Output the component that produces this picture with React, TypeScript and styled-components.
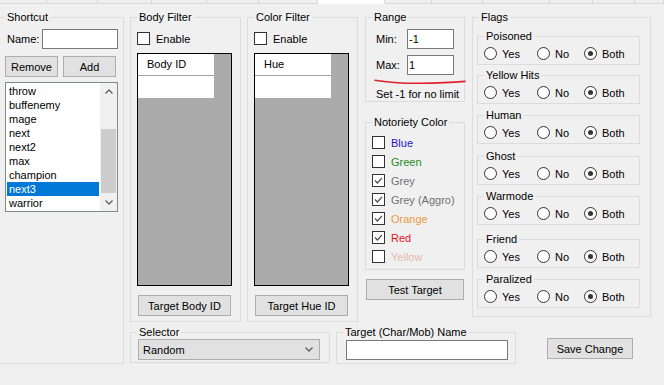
import styled, { createGlobalStyle } from 'styled-components';

const GlobalStyle = createGlobalStyle`
  * {
    box-sizing: border-box;
  }
  body {
    margin: 0;
    background: #f0f0f0;
    font-family: 'Liberation Sans', Arial, sans-serif;
    font-size: 11px;
    color: #000;
  }
  input,
  button {
    font: inherit;
    color: inherit;
  }
`;

// widths of the tab headers peeking in at the top edge
const TABS = [47, 51, 54, 55, 52, 59, 67, 47, 51, 67, 43, 42, 29];
const ACTIVE_TAB = 6;

const SHORTCUTS = ['throw', 'buffenemy', 'mage', 'next', 'next2', 'max', 'champion', 'next3', 'warrior'];
const SELECTED_SHORTCUT = 'next3';

const NOTORIETY = [
  { label: 'Blue', color: '#1c16c4', checked: false },
  { label: 'Green', color: '#248a1c', checked: false },
  { label: 'Grey', color: '#707070', checked: true },
  { label: 'Grey (Aggro)', color: '#707070', checked: true },
  { label: 'Orange', color: '#f09840', checked: true },
  { label: 'Red', color: '#e4141c', checked: true },
  { label: 'Yellow', color: '#e6b8ae', checked: false },
];

// space above each flag box (they are not evenly spread in the form)
const FLAGS = [
  { label: 'Poisoned', top: 5 },
  { label: 'Yellow Hits', top: 3 },
  { label: 'Human', top: 4 },
  { label: 'Ghost', top: 5 },
  { label: 'Warmode', top: 4 },
  { label: 'Friend', top: 7 },
  { label: 'Paralized', top: 4 },
];

const RADIO_OPTIONS = [
  { label: 'Yes', width: 53 },
  { label: 'No', width: 47 },
  { label: 'Both', width: 50 },
];

const CheckMark = () => (
  <svg width='9' height='9' viewBox='0 0 9 9'>
    <polyline points='1,4.5 3.4,7 8,1.8' fill='none' stroke='#4a4a4a' strokeWidth='1.2' />
  </svg>
);

const Chevron = ({ up }: { up?: boolean }) => (
  <svg width='8' height='5' viewBox='0 0 8 5'>
    <polyline
      points={up ? '0.5,4.5 4,1 7.5,4.5' : '0.5,0.5 4,4 7.5,0.5'}
      fill='none'
      stroke='#606060'
      strokeWidth='1.3'
    />
  </svg>
);

const CheckBox = ({ checked }: { checked?: boolean }) => (
  <Box>{checked && <CheckMark />}</Box>
);

export default function App() {
  return (
    <Page>
      <GlobalStyle />
      <TabStrip>
        {TABS.map((w, i) => (
          <Tab key={i} $w={w} $active={i === ACTIVE_TAB} />
        ))}
      </TabStrip>

      <Content>
        <Group $w={126} $h={354} style={{ marginLeft: -2 }}>
          <Legend>Shortcut</Legend>
          <Pane $pl={7}>
            <FieldRow $mt={5}>
              <FieldLabel $w={35} $ml={1}>Name:</FieldLabel>
              <TextInput $w={76} readOnly defaultValue='' />
            </FieldRow>
            <ButtonRow>
              <Button $w={53}>Remove</Button>
              <Button $w={53}>Add</Button>
            </ButtonRow>
            <ListBox>
              <ListItems>
                {SHORTCUTS.map(name => (
                  <ListItem key={name} $selected={name === SELECTED_SHORTCUT}>
                    {name}
                  </ListItem>
                ))}
              </ListItems>
              <ScrollBar>
                <ScrollArrow>
                  <Chevron up />
                </ScrollArrow>
                <ScrollTrack>
                  <ScrollThumb />
                </ScrollTrack>
                <ScrollArrow>
                  <Chevron />
                </ScrollArrow>
              </ScrollBar>
            </ListBox>
          </Pane>
        </Group>

        <RightSide>
          <TopRow>
            <FilterGroup title='Body Filter' column='Body ID' button='Target Body ID' />
            <Spacer $w={6} />
            <FilterGroup title='Color Filter' column='Hue' button='Target Hue ID' />
            <Spacer $w={7} />

            <RangeColumn>
              <Group $w={100} $h={92}>
                <Legend>Range</Legend>
                <Pane $pl={10}>
                  <FieldRow $mt={5}>
                    <FieldLabel $w={31}>Min:</FieldLabel>
                    <TextInput $w={47} readOnly defaultValue='-1' />
                  </FieldRow>
                  <FieldRow $mt={6}>
                    <FieldLabel $w={31}>Max:</FieldLabel>
                    <TextInput $w={47} readOnly defaultValue='1' />
                  </FieldRow>
                  <Scribble width='92' height='6' viewBox='0 0 92 6'>
                    <path
                      d='M1 1.2 C 12 3.2, 26 4.4, 46 4.3 S 80 3.4, 91 2.4'
                      fill='none'
                      stroke='#e0202c'
                      strokeWidth='1.6'
                      strokeLinecap='round'
                    />
                  </Scribble>
                  <Note>Set -1 for no limit</Note>
                </Pane>
              </Group>

              <Group $w={100} $h={155} style={{ marginTop: 13 }}>
                <Legend>Notoriety Color</Legend>
                <CheckList>
                  {NOTORIETY.map(n => (
                    <CheckRow key={n.label}>
                      <CheckBox checked={n.checked} />
                      <CheckLabel $color={n.color}>{n.label}</CheckLabel>
                    </CheckRow>
                  ))}
                </CheckList>
              </Group>

              <TestButton>Test Target</TestButton>
            </RangeColumn>

            <Spacer $w={7} />

            <Group $w={179} $h={307}>
              <Legend>Flags</Legend>
              <Pane $pl={4}>
                {FLAGS.map(f => (
                  <FlagGroup key={f.label} $mt={f.top}>
                    <Legend>{f.label}</Legend>
                    <RadioRow>
                      {RADIO_OPTIONS.map(o => (
                        <RadioOption key={o.label} $w={o.width}>
                          <Radio $checked={o.label === 'Both'} />
                          {o.label}
                        </RadioOption>
                      ))}
                    </RadioRow>
                  </FlagGroup>
                ))}
              </Pane>
            </Group>
          </TopRow>

          <BottomRow>
            <Group $w={200} $h={38}>
              <Legend>Selector</Legend>
              <Pane $pl={7}>
                <Dropdown>
                  <span>Random</span>
                  <Chevron />
                </Dropdown>
              </Pane>
            </Group>
            <Spacer $w={6} />
            <Group $w={180} $h={39}>
              <Legend>Target (Char/Mob) Name</Legend>
              <Pane $pl={9}>
                <TextInput $w={162} readOnly defaultValue='' style={{ marginTop: 1 }} />
              </Pane>
            </Group>
            <SaveButton>Save Change</SaveButton>
          </BottomRow>
        </RightSide>
      </Content>
    </Page>
  );
}

const FilterGroup = ({ title, column, button }: { title: string; column: string; button: string }) => (
  <Group $w={111} $h={312}>
    <Legend>{title}</Legend>
    <Pane $pl={6}>
      <CheckRow style={{ marginTop: 8 }}>
        <CheckBox />
        <span>Enable</span>
      </CheckRow>
      <Grid>
        <GridHead>{column}</GridHead>
        <GridCell />
      </Grid>
      <Button $w={93} style={{ marginTop: 9, marginLeft: 1 }}>
        {button}
      </Button>
    </Pane>
  </Group>
);

const Page = styled.div`
  width: 664px;
  height: 385px;
  overflow: hidden;
  display: flex;
  flex-direction: column;
`;

const TabStrip = styled.div`
  display: flex;
  height: 4px;
  flex: none;
`;

const Tab = styled.div<{ $w: number; $active: boolean }>`
  width: ${p => p.$w}px;
  flex: none;
  background: ${p => (p.$active ? '#fff' : '#f0f0f0')};
  border-right: 1px solid #d9d9d9;
  border-bottom: 1px solid ${p => (p.$active ? '#fff' : '#d9d9d9')};
`;

const Content = styled.div`
  display: flex;
  margin-top: 6px;
`;

const RightSide = styled.div`
  display: flex;
  flex-direction: column;
  margin-left: 6px;
`;

const TopRow = styled.div`
  display: flex;
  align-items: flex-start;
  height: 312px;
`;

const BottomRow = styled.div`
  display: flex;
  align-items: flex-start;
  margin-top: 3px;
`;

const Spacer = styled.div<{ $w: number }>`
  width: ${p => p.$w}px;
  flex: none;
`;

const Group = styled.fieldset<{ $w: number; $h: number }>`
  margin: 0;
  padding: 0;
  border: 1px solid #dcdcdc;
  width: ${p => p.$w}px;
  height: ${p => p.$h}px;
  min-width: 0;
  flex: none;
`;

const Legend = styled.legend`
  margin-left: 6px;
  padding: 0 2px;
  line-height: 14px;
  font-size: 11px;
`;

const Pane = styled.div<{ $pl: number }>`
  display: flex;
  flex-direction: column;
  align-items: flex-start;
  padding-left: ${p => p.$pl}px;
`;

const FieldRow = styled.div<{ $mt: number }>`
  display: flex;
  align-items: center;
  margin-top: ${p => p.$mt}px;
`;

const FieldLabel = styled.span<{ $w: number; $ml?: number }>`
  width: ${p => p.$w}px;
  margin-left: ${p => p.$ml ?? 0}px;
`;

const TextInput = styled.input<{ $w: number }>`
  width: ${p => p.$w}px;
  height: 20px;
  border: 1px solid #7a7a7a;
  background: #fff;
  padding: 0 1px;
  outline: none;
`;

const Button = styled.button<{ $w: number }>`
  width: ${p => p.$w}px;
  height: 21px;
  padding: 0;
  background: #e1e1e1;
  border: 1px solid #adadad;
  border-radius: 0;
  text-align: center;
`;

const ButtonRow = styled.div`
  display: flex;
  gap: 5px;
  margin-top: 7px;
  margin-left: -1px;
`;

const TestButton = styled(Button).attrs({ $w: 98 })`
  margin-top: 9px;
  margin-left: 1px;
`;

const SaveButton = styled(Button).attrs({ $w: 86 })`
  margin-top: 13px;
  margin-left: 31px;
`;

const ListBox = styled.div`
  display: flex;
  width: 113px;
  height: 130px;
  margin-top: 5px;
  margin-left: -1px;
  border: 1px solid #828790;
  background: #fff;
`;

const ListItems = styled.div`
  flex: 1;
  padding: 1px 0 0 1px;
`;

const ListItem = styled.div<{ $selected: boolean }>`
  width: 92px;
  height: 14px;
  line-height: 14px;
  padding-left: 2px;
  background: ${p => (p.$selected ? '#0078d7' : 'transparent')};
  color: ${p => (p.$selected ? '#fff' : '#000')};
`;

const ScrollBar = styled.div`
  width: 17px;
  flex: none;
  display: flex;
  flex-direction: column;
  background: #f0f0f0;
`;

const ScrollArrow = styled.div`
  height: 17px;
  display: flex;
  align-items: center;
  justify-content: center;
`;

const ScrollTrack = styled.div`
  flex: 1;
`;

const ScrollThumb = styled.div`
  margin: 29px 1px 0;
  height: 64px;
  background: #cdcdcd;
`;

const Box = styled.span`
  width: 13px;
  height: 13px;
  flex: none;
  border: 1px solid #333;
  background: #fff;
  display: inline-flex;
  align-items: center;
  justify-content: center;
`;

const CheckRow = styled.div`
  display: flex;
  align-items: center;
  gap: 6px;
  height: 13px;
`;

const CheckList = styled.div`
  display: flex;
  flex-direction: column;
  gap: 6px;
  padding: 7px 0 0 6px;
`;

const CheckLabel = styled.span<{ $color: string }>`
  color: ${p => p.$color};
`;

const Grid = styled.div`
  width: 95px;
  height: 233px;
  margin-top: 8px;
  border: 1px solid #000;
  background: #ababab;
`;

const GridHead = styled.div`
  width: 76px;
  height: 22px;
  line-height: 21px;
  padding-left: 9px;
  background: #fff;
  border-bottom: 1px solid #a0a0a0;
`;

const GridCell = styled.div`
  width: 76px;
  height: 22px;
  background: #fff;
`;

const RangeColumn = styled.div`
  display: flex;
  flex-direction: column;
  align-items: flex-start;
  width: 100px;
  flex: none;
`;

const Scribble = styled.svg`
  display: block;
  margin: 4px 0 0 -2px;
`;

const Note = styled.div`
  margin-top: 2px;
  line-height: 14px;
`;

const FlagGroup = styled(Group).attrs({ $w: 163, $h: 36 })<{ $mt: number }>`
  margin-top: ${p => p.$mt}px;
`;

const RadioRow = styled.div`
  display: flex;
  padding-left: 6px;
  margin-top: 4px;
`;

const RadioOption = styled.div<{ $w: number }>`
  display: flex;
  align-items: center;
  gap: 5px;
  width: ${p => p.$w}px;
  height: 13px;
`;

const Radio = styled.span<{ $checked: boolean }>`
  width: 13px;
  height: 13px;
  flex: none;
  border: 1px solid #333;
  border-radius: 50%;
  background: #fff;
  display: inline-flex;
  align-items: center;
  justify-content: center;

  &::after {
    content: '';
    display: ${p => (p.$checked ? 'block' : 'none')};
    width: 5px;
    height: 5px;
    border-radius: 50%;
    background: #333;
  }
`;

const Dropdown = styled.div`
  width: 182px;
  height: 21px;
  display: flex;
  align-items: center;
  justify-content: space-between;
  padding: 0 6px 0 4px;
  background: #e1e1e1;
  border: 1px solid #adadad;
`;
